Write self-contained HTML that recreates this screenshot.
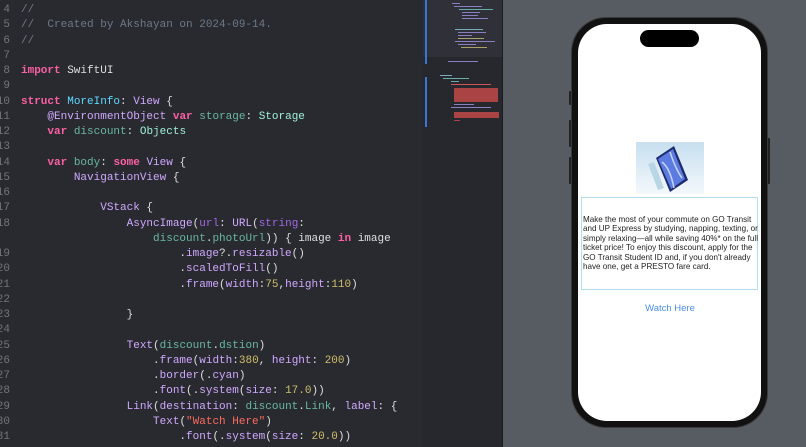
<!DOCTYPE html>
<html><head><style>
*{margin:0;padding:0;box-sizing:border-box}
body{width:806px;height:447px;overflow:hidden;background:#575b62;position:relative;font-family:"Liberation Sans",sans-serif}
#ed{position:absolute;left:0;top:0;width:423px;height:447px;background:#292a30;overflow:hidden}
.ln{position:absolute;left:0;width:420px;height:16px;font:11px/16px "Liberation Mono",monospace;color:#dfdfe0;white-space:pre}
.n{position:absolute;left:-6px;width:16px;text-align:right;color:#747478}
.c{position:absolute;left:21px}
.k{color:#fc5fa3;font-weight:bold}.cm{color:#6c7986}.t{color:#d0a8ff}.p{color:#9ef1dd}.id{color:#67b7a4}.dc{color:#5dd8ff}.nu{color:#d0bf69}.s{color:#fc6a5d}.m{color:#a167e6}
#mm{position:absolute;left:423px;top:0;width:79px;height:447px;background:#27282d}
#mm .hl{position:absolute;left:0;top:0;width:79px;height:57px;background:#303138}
#mm .bar{position:absolute;left:2px;width:2px;background:#3a76d6}
#mm i{position:absolute;height:1.3px;display:block}
#div{position:absolute;left:502px;top:0;width:1px;height:447px;background:#1a1a1d}
#ph{position:absolute;left:572px;top:18px;width:195px;height:409px;border-radius:34px;background:#111;box-shadow:0 0 0 1px #3a3a3c}
#scr{position:absolute;left:578px;top:24px;width:183px;height:397px;border-radius:29px;background:#fff;overflow:hidden}
#isl{position:absolute;left:640px;top:30px;width:59px;height:17px;border-radius:9px;background:#000}
.btn{position:absolute;background:#222;width:3px;border-radius:1px}
#img{position:absolute;left:636px;top:142px;width:68px;height:52px;background:linear-gradient(#c7dff0,#f4f8fb)}
#box{position:absolute;left:581px;top:197px;width:177px;height:93px;border:1px solid #b5dcec}
#txt{position:absolute;left:583px;top:215px;width:180px;font-size:8.1px;line-height:9.45px;color:#222;white-space:nowrap}
#w{position:absolute;left:620px;top:303px;width:100px;text-align:center;color:#4a8ee8;font-size:9.5px}
</style></head><body>
<div id="ed">
<div class="ln" style="top:2px"><span class="n">4</span><span class="c cm">//</span></div>
<div class="ln" style="top:17.25px"><span class="n">5</span><span class="c cm">//  Created by Akshayan on 2024-09-14.</span></div>
<div class="ln" style="top:32.5px"><span class="n">6</span><span class="c cm">//</span></div>
<div class="ln" style="top:47.75px"><span class="n">7</span></div>
<div class="ln" style="top:63px"><span class="n">8</span><span class="c"><span class="k">import</span> SwiftUI</span></div>
<div class="ln" style="top:78.25px"><span class="n">9</span></div>
<div class="ln" style="top:93.5px"><span class="n">10</span><span class="c"><span class="k">struct</span> <span class="dc">MoreInfo</span>: <span class="t">View</span> {</span></div>
<div class="ln" style="top:108.75px"><span class="n">11</span><span class="c">    <span class="t">@EnvironmentObject</span> <span class="k">var</span> <span class="id">storage</span>: <span class="p">Storage</span></span></div>
<div class="ln" style="top:124px"><span class="n">12</span><span class="c">    <span class="k">var</span> <span class="id">discount</span>: <span class="p">Objects</span></span></div>
<div class="ln" style="top:139.25px"><span class="n">13</span></div>
<div class="ln" style="top:154.5px"><span class="n">14</span><span class="c">    <span class="k">var</span> <span class="id">body</span>: <span class="k">some</span> <span class="t">View</span> {</span></div>
<div class="ln" style="top:169.75px"><span class="n">15</span><span class="c">        <span class="t">NavigationView</span> {</span></div>
<div class="ln" style="top:185px"><span class="n">16</span></div>
<div class="ln" style="top:200.25px"><span class="n">17</span><span class="c">            <span class="t">VStack</span> {</span></div>
<div class="ln" style="top:215.5px"><span class="n">18</span><span class="c">                <span class="t">AsyncImage</span>(<span class="m">url</span>: <span class="t">URL</span>(<span class="m">string</span>:</span></div>
<div class="ln" style="top:230.75px"><span class="c">                    <span class="id">discount</span>.<span class="id">photoUrl</span>)) { image <span class="k">in</span> image</span></div>
<div class="ln" style="top:246px"><span class="n">19</span><span class="c">                        .<span class="t">image</span>?.<span class="t">resizable</span>()</span></div>
<div class="ln" style="top:261.25px"><span class="n">20</span><span class="c">                        .<span class="t">scaledToFill</span>()</span></div>
<div class="ln" style="top:276.5px"><span class="n">21</span><span class="c">                        .<span class="t">frame</span>(<span class="t">width</span>:<span class="nu">75</span>,<span class="t">height</span>:<span class="nu">110</span>)</span></div>
<div class="ln" style="top:291.75px"><span class="n">22</span></div>
<div class="ln" style="top:307px"><span class="n">23</span><span class="c">                }</span></div>
<div class="ln" style="top:322.25px"><span class="n">24</span></div>
<div class="ln" style="top:337.5px"><span class="n">25</span><span class="c">                <span class="t">Text</span>(<span class="id">discount</span>.<span class="id">dstion</span>)</span></div>
<div class="ln" style="top:352.75px"><span class="n">26</span><span class="c">                    .<span class="t">frame</span>(<span class="t">width</span>:<span class="nu">380</span>, <span class="t">height</span>: <span class="nu">200</span>)</span></div>
<div class="ln" style="top:368px"><span class="n">27</span><span class="c">                    .<span class="t">border</span>(.<span class="t">cyan</span>)</span></div>
<div class="ln" style="top:383.25px"><span class="n">28</span><span class="c">                    .<span class="t">font</span>(.<span class="t">system</span>(<span class="t">size</span>: <span class="nu">17.0</span>))</span></div>
<div class="ln" style="top:398.5px"><span class="n">29</span><span class="c">                <span class="t">Link</span>(<span class="t">destination</span>: <span class="id">discount</span>.<span class="id">Link</span>, <span class="t">label</span>: {</span></div>
<div class="ln" style="top:413.75px"><span class="n">30</span><span class="c">                    <span class="t">Text</span>(<span class="s">"Watch Here"</span>)</span></div>
<div class="ln" style="top:429px"><span class="n">31</span><span class="c">                        .<span class="t">font</span>(.<span class="t">system</span>(<span class="t">size</span>: <span class="nu">20.0</span>))</span></div>
</div>
<div id="mm"><div class="hl"></div>
<div class="bar" style="top:0;height:64px"></div><div class="bar" style="top:77px;height:50px"></div>
<i style="left:29px;top:3px;width:8px;background:#8a7fc0"></i>
<i style="left:31px;top:6px;width:28px;background:#8a7fc0"></i>
<i style="left:36px;top:9px;width:34px;background:#6aa"></i>
<i style="left:39px;top:12px;width:18px;background:#8a7fc0"></i>
<i style="left:39px;top:15px;width:16px;background:#8a7fc0"></i>
<i style="left:39px;top:18px;width:26px;background:#8a7fc0"></i>
<i style="left:32px;top:29px;width:28px;background:#7ab"></i>
<i style="left:35px;top:32px;width:28px;background:#8a7fc0"></i>
<i style="left:35px;top:35px;width:14px;background:#8a7fc0"></i>
<i style="left:35px;top:38px;width:26px;background:#a9a06a"></i>
<i style="left:32px;top:41px;width:40px;background:#8a7fc0"></i>
<i style="left:35px;top:44px;width:18px;background:#8a7fc0"></i>
<i style="left:38px;top:47px;width:26px;background:#a9a06a"></i>
<i style="left:25px;top:61px;width:30px;background:#8a7fc0"></i>
<i style="left:17px;top:75px;width:12px;background:#7ab"></i>
<i style="left:20px;top:78px;width:26px;background:#6aa"></i>
<i style="left:28px;top:81px;width:8px;background:#6aa"></i>
<i style="left:28px;top:84px;width:40px;background:#c55"></i>
<i style="left:31px;top:88px;width:44px;height:14px;background:#a44"></i>
<i style="left:31px;top:104px;width:20px;background:#8a7fc0"></i>
<i style="left:28px;top:107px;width:40px;background:#8a7fc0"></i>
<i style="left:31px;top:112px;width:45px;height:6px;background:#a44"></i>
<i style="left:31px;top:120px;width:6px;background:#a44"></i>
</div>
<div id="div"></div>
<div class="btn" style="left:569px;top:91px;height:14px"></div>
<div class="btn" style="left:569px;top:120px;height:27px"></div>
<div class="btn" style="left:569px;top:157px;height:27px"></div>
<div class="btn" style="left:767px;top:138px;height:46px"></div>
<div id="ph"></div>
<div id="scr"></div>
<div id="isl"></div>
<div id="img"><svg width="68" height="52" viewBox="0 0 68 52"><polygon points="12,22 22,48 28,46 18,20" fill="#b9d6e6"/><polygon points="20,16 38,4 52,38 34,50" fill="#1d2a6e"/><polygon points="22,17 37,7 49,37 35,47" fill="#5b7be0"/><path d="M26,20 Q34,26 38,46 M34,10 Q40,28 46,36" stroke="#c7d4ff" stroke-width="1.5" fill="none"/></svg></div>
<div id="box"></div>
<div id="txt">Make the most of your commute on GO Transit<br>and UP Express by studying, napping, texting, or<br>simply relaxing—all while saving 40%* on the full<br>ticket price! To enjoy this discount, apply for the<br>GO Transit Student ID and, if you don't already<br>have one, get a PRESTO fare card.</div>
<div id="w">Watch Here</div>
</body></html>
